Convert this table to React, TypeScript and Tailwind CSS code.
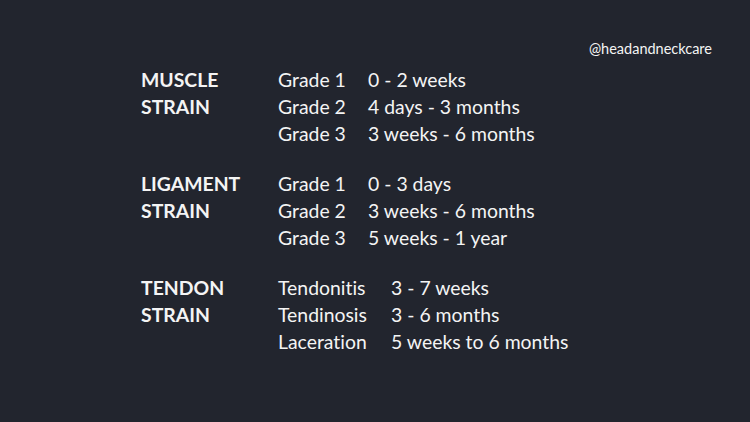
const groups = [
  {
    label: ['MUSCLE', 'STRAIN'],
    col: 'w-[90px]',
    rows: [
      ['Grade 1', '0 - 2 weeks'],
      ['Grade 2', '4 days - 3 months'],
      ['Grade 3', '3 weeks - 6 months'],
    ],
  },
  {
    label: ['LIGAMENT', 'STRAIN'],
    col: 'w-[90px]',
    rows: [
      ['Grade 1', '0 - 3 days'],
      ['Grade 2', '3 weeks - 6 months'],
      ['Grade 3', '5 weeks - 1 year'],
    ],
  },
  {
    label: ['TENDON', 'STRAIN'],
    col: 'w-[113px]',
    rows: [
      ['Tendonitis', '3 - 7 weeks'],
      ['Tendinosis', '3 - 6 months'],
      ['Laceration', '5 weeks to 6 months'],
    ],
  },
];

export default function App() {
  return (
    <main
      className="w-[750px] h-[422px] bg-[#22252e] text-[#f4f4f4] flex flex-col [font-variant-ligatures:none]"
      style={{ fontFamily: 'Lato, "Open Sans", sans-serif' }}
    >
      <div className="flex justify-end pt-[39px] pr-[38px] text-[14.5px] leading-[20px]">
        @headandneckcare
      </div>
      <div className="flex flex-col gap-[23px] pl-[141px] pt-[7px]">
        {groups.map((g) => (
          <section key={g.label[0]} className="flex text-[19.4px] leading-[27px]">
            <div className="w-[137px] font-bold">
              {g.label.map((l) => (
                <div key={l}>{l}</div>
              ))}
            </div>
            <div>
              {g.rows.map(([a, b]) => (
                <div key={a} className="flex">
                  <span className={g.col}>{a}</span>
                  <span>{b}</span>
                </div>
              ))}
            </div>
          </section>
        ))}
      </div>
    </main>
  );
}
